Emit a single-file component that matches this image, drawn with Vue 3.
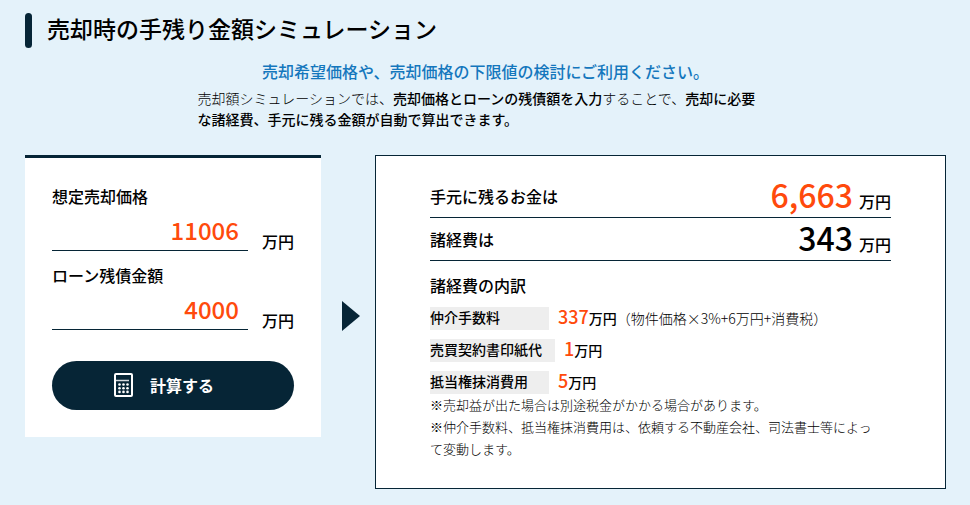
<script setup>
import { ref, reactive } from 'vue'

const price = ref('11006')
const loan = ref('4000')

const result = reactive({ remaining: 0, total: 0, brokerage: 0, stamp: 1, mortgage: 5 })

function calculate() {
  const p = Number(price.value) || 0
  const l = Number(loan.value) || 0
  result.brokerage = Math.ceil(p * 0.03 + 6)
  result.total = result.brokerage + result.stamp + result.mortgage
  result.remaining = p - l - result.total
}

const format = (n) => n.toLocaleString('en-US')

calculate()
</script>

<template>
  <main class="page">
    <h1 class="title">売却時の手残り金額シミュレーション</h1>

    <div class="intro">
      <p class="lead">売却希望価格や、売却価格の下限値の検討にご利用ください。</p>
      <p class="description">売却額シミュレーションでは、<strong>売却価格とローンの残債額を入力</strong>することで、<strong>売却に必要な諸経費、手元に残る金額が自動で算出できます。</strong></p>
    </div>

    <div class="simulator">
      <form class="form" @submit.prevent="calculate">
        <div class="field">
          <label for="price">想定売却価格</label>
          <div class="entry">
            <input id="price" v-model="price" type="text" inputmode="numeric" />
            <span class="unit">万円</span>
          </div>
        </div>
        <div class="field">
          <label for="loan">ローン残債金額</label>
          <div class="entry">
            <input id="loan" v-model="loan" type="text" inputmode="numeric" />
            <span class="unit">万円</span>
          </div>
        </div>
        <button class="submit" type="submit">
          <svg class="calculator" viewBox="0 0 20 24" width="20" height="24" aria-hidden="true">
            <rect x="1" y="1" width="17" height="22" rx="1" fill="none" stroke="#fff" stroke-width="2" />
            <path d="M2 7.5H15" stroke="#d5dade" stroke-width="1.5" />
            <g fill="#fff">
              <circle cx="5.5" cy="11.5" r="1.3" /><circle cx="9.5" cy="11.5" r="1.3" /><circle cx="13.5" cy="11.5" r="1.3" />
              <circle cx="5.5" cy="15.2" r="1.3" /><circle cx="9.5" cy="15.2" r="1.3" /><circle cx="13.5" cy="15.2" r="1.3" />
              <circle cx="5.5" cy="18.9" r="1.3" /><circle cx="9.5" cy="18.9" r="1.3" /><circle cx="13.5" cy="18.9" r="1.3" />
            </g>
          </svg>
          <span>計算する</span>
        </button>
      </form>

      <div class="arrow">
        <svg viewBox="0 0 18 30" width="18" height="30" aria-hidden="true">
          <path d="M0 0L18 15L0 30Z" fill="#062536" />
        </svg>
      </div>

      <section class="result">
        <div class="total">
          <span>手元に残るお金は</span>
          <span class="figure"><b class="amount accent">{{ format(result.remaining) }}</b><span>万円</span></span>
        </div>
        <div class="total">
          <span>諸経費は</span>
          <span class="figure"><b class="amount">{{ format(result.total) }}</b><span>万円</span></span>
        </div>

        <h2 class="subtitle">諸経費の内訳</h2>
        <dl class="breakdown">
          <div class="item">
            <dt>仲介手数料</dt>
            <dd><b class="accent">{{ result.brokerage }}</b>万円<span class="formula">（物件価格×3%+6万円+消費税）</span></dd>
          </div>
          <div class="item">
            <dt>売買契約書印紙代</dt>
            <dd><b class="accent">{{ result.stamp }}</b>万円</dd>
          </div>
          <div class="item">
            <dt>抵当権抹消費用</dt>
            <dd><b class="accent">{{ result.mortgage }}</b>万円</dd>
          </div>
        </dl>
        <p class="note">※売却益が出た場合は別途税金がかかる場合があります。</p>
        <p class="note">※仲介手数料、抵当権抹消費用は、依頼する不動産会社、司法書士等によって変動します。</p>
      </section>
    </div>
  </main>
</template>

<style>
body {
  background: #e4f2fa;
}
</style>

<style scoped>
.page,
.page * {
  box-sizing: border-box;
}
.page {
  padding: 13px 24px 16px 25px;
  color: #000;
  font-family: "Noto Sans CJK JP", "Noto Sans", sans-serif;
  font-size: 16px;
  font-weight: 500;
  line-height: 24px;
}
h1, h2, p, dl, dd {
  margin: 0;
}
.title {
  display: flex;
  align-items: flex-start;
  gap: 15px;
  min-height: 35px;
  font-size: 23px;
  font-weight: 500;
  line-height: 30px;
}
.title::before {
  content: "";
  flex: none;
  align-self: stretch;
  width: 7px;
  border-radius: 4px;
  background: #062536;
}
.intro {
  max-width: 576px;
  margin: 11px auto 25px;
}
.lead {
  color: #1477bd;
  text-align: center;
}
.description {
  margin-top: 5px;
  padding: 0 8px 0 0;
  font-size: 14px;
  font-weight: 300;
  line-height: 21px;
}
.description strong {
  font-weight: 500;
}
.simulator {
  display: grid;
  grid-template-columns: minmax(0, 296fr) 54px minmax(0, 571fr);
  align-items: start;
}
.form {
  padding: 26px 27px 27px;
  border-top: 3px solid #062536;
  background: #fff;
}
.field {
  margin-bottom: 12px;
}
.field label {
  display: block;
  margin-bottom: 1px;
}
.entry {
  display: flex;
  align-items: flex-end;
  gap: 14px;
}
.entry input {
  flex: 1;
  min-width: 0;
  height: 42px;
  padding: 0 9px 0 0;
  border: 0;
  border-bottom: 1px solid #062536;
  border-radius: 0;
  outline: 0;
  background: transparent;
  color: #ff4a0c;
  font: inherit;
  font-size: 24px;
  text-align: right;
}
.entry .unit {
  line-height: 20px;
}
.submit {
  display: flex;
  align-items: center;
  justify-content: center;
  gap: 16px;
  width: 100%;
  height: 49px;
  margin-top: 31px;
  padding: 0 18px 2px 0;
  border: 0;
  border-radius: 25px;
  background: #062536;
  color: #fff;
  font: inherit;
  font-weight: 700;
  cursor: pointer;
}
.arrow {
  display: flex;
  align-self: center;
  justify-content: flex-end;
  padding: 0 15px 12px 0;
}
.result {
  padding: 19px 54px 28px;
  border: 1px solid #062536;
  background: #fff;
}
.total {
  display: flex;
  align-items: center;
  justify-content: space-between;
  height: 43px;
  border-bottom: 1px solid #062536;
}
.figure {
  padding-bottom: 4px;
}
.amount {
  margin-right: 6px;
  font-size: 32px;
  font-weight: 500;
  line-height: 38px;
}
.accent {
  color: #ff4a0c;
}
.subtitle {
  margin: 12px 0 10px;
  font-size: 16px;
  font-weight: 500;
}
.breakdown {
  display: grid;
  gap: 9px;
  font-size: 14px;
  line-height: 21px;
}
.item {
  display: flex;
  gap: 9px;
}
.item dt {
  min-width: 119px;
  padding: 0 13px 2px 0;
  background: #eee;
}
.item b {
  font-size: 18px;
  font-weight: 500;
  line-height: 18px;
}
.formula {
  font-weight: 300;
}
.note {
  padding-right: 8px;
  font-size: 13px;
  font-weight: 300;
  line-height: 22px;
}
@media (max-width: 760px) {
  .simulator {
    grid-template-columns: minmax(0, 1fr);
    gap: 16px;
  }
  .arrow {
    justify-content: center;
    padding: 0;
    transform: rotate(90deg);
  }
  .result {
    padding-right: 27px;
    padding-left: 27px;
  }
}
</style>
